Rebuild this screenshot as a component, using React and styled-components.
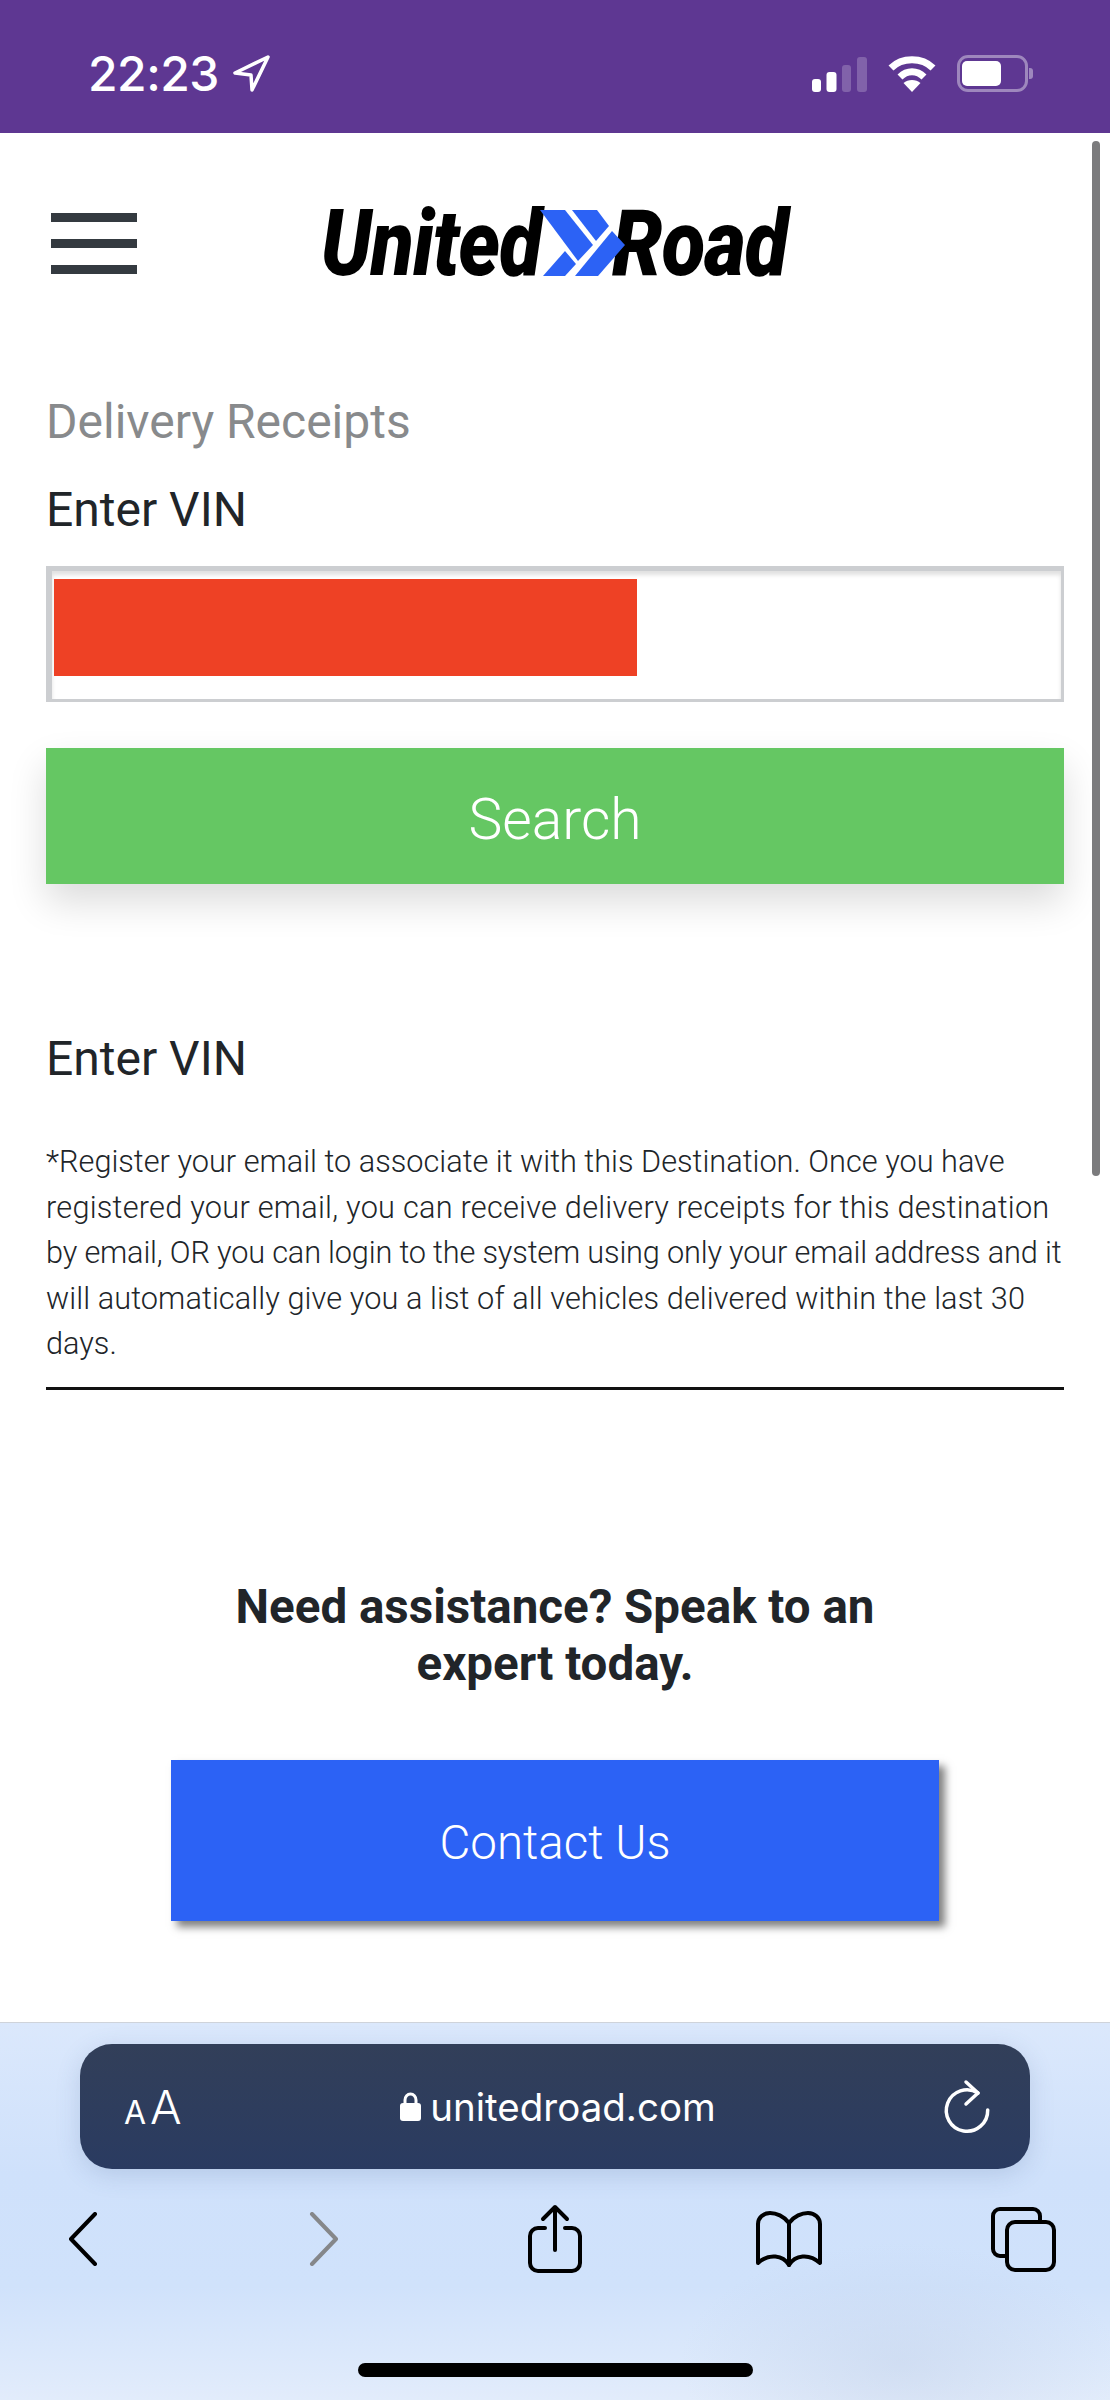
import React from "react";
import styled, { createGlobalStyle } from "styled-components";

const GlobalStyle = createGlobalStyle`
  html, body {
    margin: 0;
    padding: 0;
    background: #fff;
  }
  * {
    box-sizing: border-box;
  }
`;

const Phone = styled.div`
  position: relative;
  width: 1110px;
  height: 2400px;
  display: flex;
  flex-direction: column;
  overflow: hidden;
  font-family: "Roboto", sans-serif;
  color: #212529;
`;

const StatusBar = styled.div`
  height: 133px;
  flex: none;
  background: #5e3792;
  display: flex;
  align-items: flex-start;
  justify-content: space-between;
  padding: 55px 82px 0 88px;
  color: #fff;
`;

const StatusLeft = styled.div`
  display: flex;
  align-items: center;
  gap: 14px;
`;

const Clock = styled.span`
  font-family: "Inter", sans-serif;
  font-size: 48px;
  font-weight: 500;
  line-height: 37px;
  letter-spacing: -0.5px;
`;

const StatusRight = styled.div`
  display: flex;
  align-items: center;
  gap: 21px;
`;

const Battery = styled.div`
  position: relative;
  width: 71px;
  height: 37px;
  border: 3px solid rgba(255, 255, 255, 0.4);
  border-radius: 11px;
  padding: 3px 0 3px 2px;

  &::before {
    content: "";
    display: block;
    width: 39px;
    height: 100%;
    background: #fff;
    border-radius: 5px;
  }

  &::after {
    content: "";
    position: absolute;
    right: -8px;
    top: 10px;
    width: 4px;
    height: 11px;
    border-radius: 0 3px 3px 0;
    background: rgba(255, 255, 255, 0.4);
  }
`;

const Page = styled.main`
  position: relative;
  flex: 1;
  background: #fff;
  padding: 77px 46px 0;
`;

const Scrollbar = styled.div`
  position: absolute;
  top: 8px;
  right: 10px;
  width: 8px;
  height: 1035px;
  border-radius: 4px;
  background: #7b7b7d;
`;

const Header = styled.header`
  display: grid;
  grid-template-columns: 1fr auto 1fr;
  align-items: center;
  height: 67px;
`;

const Burger = styled.div`
  display: flex;
  flex-direction: column;
  gap: 17px;
  width: 86px;
  margin-left: 5px;
`;

const BurgerLine = styled.span`
  display: block;
  height: 9px;
  background: #343a40;
`;

const Logo = styled.div`
  display: flex;
  align-items: center;
  height: 67px;
  margin-top: -1px;
`;

const LogoWord = styled.span`
  display: block;
  width: ${(p) => p.$width}px;
  margin-left: ${(p) => p.$offset || 0}px;
  font-family: "Roboto", sans-serif;
  font-size: 93px;
  line-height: 67px;
  font-weight: 900;
  font-style: italic;
  color: #000;
  white-space: nowrap;
  letter-spacing: -1px;
  transform: scaleX(${(p) => p.$scale});
  transform-origin: left center;
`;

const ChevronMark = styled.svg`
  display: block;
  position: relative;
  z-index: 1;
  flex: none;
`;

const Crumb = styled.h2`
  margin: 119px 0 0;
  font-size: 48px;
  line-height: 52px;
  font-weight: 400;
  color: #888a8c;
`;

const FieldLabel = styled.label`
  display: block;
  margin-top: 36px;
  font-size: 48px;
  line-height: 52px;
  font-weight: 400;
  color: #212529;
`;

const VinField = styled.div`
  height: 136px;
  margin-top: 30px;
  border: 3px solid #ccced1;
  border-top-width: 5px;
  border-left-width: 6px;
  background: #fff;
  box-shadow: inset 0 4px 4px rgba(0, 0, 0, 0.12);
  padding: 8px 0 0 2px;
`;

const Redaction = styled.div`
  width: 583px;
  height: 97px;
  background: #ee4125;
`;

const SearchButton = styled.button`
  display: block;
  width: 100%;
  height: 136px;
  margin-top: 46px;
  padding: 6px 0 0;
  border: 0;
  background: #65c763;
  color: #fff;
  font-family: inherit;
  font-size: 57px;
  font-weight: 300;
  box-shadow: 0 18px 36px rgba(0, 0, 0, 0.14);
`;

const SectionTitle = styled.h3`
  margin: 149px 0 0;
  font-size: 48px;
  line-height: 52px;
  font-weight: 400;
  color: #212529;
`;

const Note = styled.p`
  margin: 54px 0 0;
  font-size: 30.7px;
  line-height: 45.5px;
  font-weight: 300;
  color: #212529;
  white-space: nowrap;
  padding-bottom: 20px;
  border-bottom: 3px solid #111;
`;

const NoteLine = styled.span`
  display: block;
  letter-spacing: ${(p) => p.$track || 0}px;
`;

const Assist = styled.section`
  display: flex;
  flex-direction: column;
  align-items: center;
  margin-top: 189px;
`;

const AssistTitle = styled.h2`
  margin: 0;
  width: 700px;
  text-align: center;
  font-size: 47.5px;
  line-height: 57px;
  font-weight: 700;
  color: #212529;
`;

const ContactButton = styled.button`
  width: 768px;
  height: 161px;
  margin-top: 67px;
  padding: 6px 0 0;
  border: 0;
  background: #2c62f5;
  color: #fff;
  font-family: inherit;
  font-size: 47.5px;
  font-weight: 300;
  box-shadow: 6px 6px 8px rgba(0, 0, 0, 0.5);
`;

const SafariBar = styled.footer`
  position: relative;
  height: 378px;
  flex: none;
  border-top: 1px solid #cfd3da;
  background:
    radial-gradient(ellipse 220px 120px at 900px 340px, rgba(190, 205, 230, 0.4), transparent),
    linear-gradient(180deg, #dbe8fc 0%, #cfe1fb 40%, #d0e2fb 70%, #e2ecfb 100%);
  padding-top: 21px;
`;

const UrlBar = styled.div`
  width: 950px;
  height: 125px;
  margin-left: 80px;
  border-radius: 32px;
  background: linear-gradient(180deg, #323f59, #2a3b61);
  box-shadow: 0 6px 24px rgba(60, 90, 140, 0.18);
  display: grid;
  grid-template-columns: 1fr auto 1fr;
  align-items: center;
  padding: 0 38px 0 44px;
  color: #fff;
`;

const TextSize = styled.span`
  font-family: "Inter", sans-serif;
  font-weight: 300;
  font-size: 47px;
  line-height: 1;
`;

const SmallA = styled.span`
  font-size: 32px;
  font-weight: 400;
  margin-right: 4px;
`;

const Address = styled.div`
  display: flex;
  align-items: center;
  gap: 9px;
  font-family: "Inter", sans-serif;
  font-size: 38.5px;
  font-weight: 400;
`;

const ReloadWrap = styled.div`
  justify-self: end;
  display: flex;
`;

const Toolbar = styled.nav`
  display: grid;
  grid-template-columns: repeat(5, 234px);
  justify-content: center;
  align-items: center;
  justify-items: center;
  height: 70px;
  margin-top: 35px;
`;

const HomeIndicator = styled.div`
  position: absolute;
  left: 358px;
  top: 340px;
  width: 395px;
  height: 14px;
  border-radius: 7px;
  background: #000;
`;

const ToolIcon = styled.svg`
  display: block;
  fill: none;
  stroke: ${(p) => p.$stroke || "#000"};
  stroke-width: ${(p) => p.$weight || 4};
  stroke-linecap: round;
  stroke-linejoin: round;
  margin-left: ${(p) => p.$shift || 0}px;
`;

const Signal = () => (
  <svg width="55" height="36" viewBox="0 0 55 36" style={{ display: "block" }}>
    <rect x="0" y="23" width="9" height="13" rx="3" fill="#fff" />
    <rect x="14.5" y="16" width="10" height="20" rx="3" fill="#fff" />
    <rect x="30" y="9" width="9" height="27" rx="3" fill="#fff" fillOpacity="0.22" />
    <rect x="45" y="1" width="10" height="35" rx="3" fill="#fff" fillOpacity="0.22" />
  </svg>
);

const Wifi = () => (
  <svg width="48" height="36" viewBox="0 0 48 36" fill="none" stroke="#fff" strokeWidth="7" style={{ display: "block" }}>
    <path d="M3 12 C14 1 34 1 45 12" />
    <path d="M12 21 C19 14 29 14 36 21" />
    <path d="M24 36 L15.5 27 C20 23 28 23 32.5 27 Z" fill="#fff" stroke="none" />
  </svg>
);

const LocationArrow = () => (
  <svg width="37" height="37" viewBox="0 0 37 37" fill="none" stroke="#fff" strokeWidth="3.5" strokeLinejoin="round" style={{ display: "block" }}>
    <path d="M35 2 L2 18 L18 20 L19 35 Z" />
  </svg>
);

const Chevrons = () => (
  <ChevronMark width="85" height="67" viewBox="0 0 85 67">
    <g fill="#2c62f5">
      <path d="M0 0 H25 L53 35 L38 51 Z" />
      <path d="M32 0 H57 L69 16 L56 31 Z" />
      <path d="M72 21 L85 35 L58 66 H35 Z" />
      <path d="M25 41 L36 54 L25 66 H3 Z" />
    </g>
  </ChevronMark>
);

const Lock = () => (
  <svg width="21" height="29" viewBox="0 0 21 29" style={{ display: "block" }}>
    <path d="M5 13 V8 a5.5 6 0 0 1 11 0 V13" fill="none" stroke="#fff" strokeWidth="3" />
    <rect x="0" y="11" width="21" height="18" rx="3" fill="#fff" />
  </svg>
);

const Reload = () => (
  <ToolIcon $stroke="#fff" $weight={3.5} width="50" height="56" viewBox="0 0 50 56">
    <path d="M45.7 31 A20.7 20.7 0 1 1 36 14" />
    <path d="M24 3 L36 14 L24 25" />
  </ToolIcon>
);

const App = () => {
  return (
    <Phone>
      <GlobalStyle />
      <StatusBar>
        <StatusLeft>
          <Clock>22:23</Clock>
          <LocationArrow />
        </StatusLeft>
        <StatusRight>
          <Signal />
          <Wifi />
          <Battery />
        </StatusRight>
      </StatusBar>

      <Page>
        <Scrollbar />
        <Header>
          <Burger>
            <BurgerLine />
            <BurgerLine />
            <BurgerLine />
          </Burger>
          <Logo>
            <LogoWord $width={219} $scale={0.845}>United</LogoWord>
            <Chevrons />
            <LogoWord $width={177} $offset={-13} $scale={0.86}>Road</LogoWord>
          </Logo>
          <div />
        </Header>

        <Crumb>Delivery Receipts</Crumb>
        <FieldLabel>Enter VIN</FieldLabel>
        <VinField>
          <Redaction />
        </VinField>
        <SearchButton>Search</SearchButton>

        <SectionTitle>Enter VIN</SectionTitle>
        <Note>
          <NoteLine>*Register your email to associate it with this Destination. Once you have</NoteLine>
          <NoteLine $track={0.24}>registered your email, you can receive delivery receipts for this destination</NoteLine>
          <NoteLine $track={-0.18}>by email, OR you can login to the system using only your email address and it</NoteLine>
          <NoteLine $track={0.08}>will automatically give you a list of all vehicles delivered within the last 30</NoteLine>
          <NoteLine>days.</NoteLine>
        </Note>

        <Assist>
          <AssistTitle>Need assistance? Speak to an expert today.</AssistTitle>
          <ContactButton>Contact Us</ContactButton>
        </Assist>
      </Page>

      <SafariBar>
        <UrlBar>
          <TextSize><SmallA>A</SmallA>A</TextSize>
          <Address>
            <Lock />
            unitedroad.com
          </Address>
          <ReloadWrap>
            <Reload />
          </ReloadWrap>
        </UrlBar>
        <Toolbar>
          <ToolIcon $shift={-8} width="30" height="54" viewBox="0 0 30 54">
            <path d="M27 2 L3 27 L27 52" />
          </ToolIcon>
          <ToolIcon $stroke="#85878a" $shift={6} width="30" height="54" viewBox="0 0 30 54">
            <path d="M3 2 L27 27 L3 52" />
          </ToolIcon>
          <ToolIcon width="54" height="70" viewBox="0 0 54 70">
            <path d="M17 24 H10 a8 8 0 0 0 -8 8 V59 a8 8 0 0 0 8 8 H44 a8 8 0 0 0 8 -8 V32 a8 8 0 0 0 -8 -8 H37" />
            <path d="M27 46 V3 M15 15 L27 3 L39 15" />
          </ToolIcon>
          <ToolIcon width="68" height="56" viewBox="0 0 68 56">
            <path d="M34 12 C29 5 21 2 15 2 C8 2 3 7 3 13 V52 C14 42 28 44 34 54 C40 44 54 42 65 52 V13 C65 7 60 2 53 2 C47 2 39 5 34 12 Z" />
            <path d="M34 12 V54" />
          </ToolIcon>
          <ToolIcon width="66" height="66" viewBox="0 0 66 66">
            <path d="M15 50 H10 a7 7 0 0 1 -7 -7 V10 a7 7 0 0 1 7 -7 H43 a7 7 0 0 1 7 7 V15" />
            <rect x="17" y="16" width="47" height="48" rx="8" />
          </ToolIcon>
        </Toolbar>
        <HomeIndicator />
      </SafariBar>
    </Phone>
  );
};

export default App;
